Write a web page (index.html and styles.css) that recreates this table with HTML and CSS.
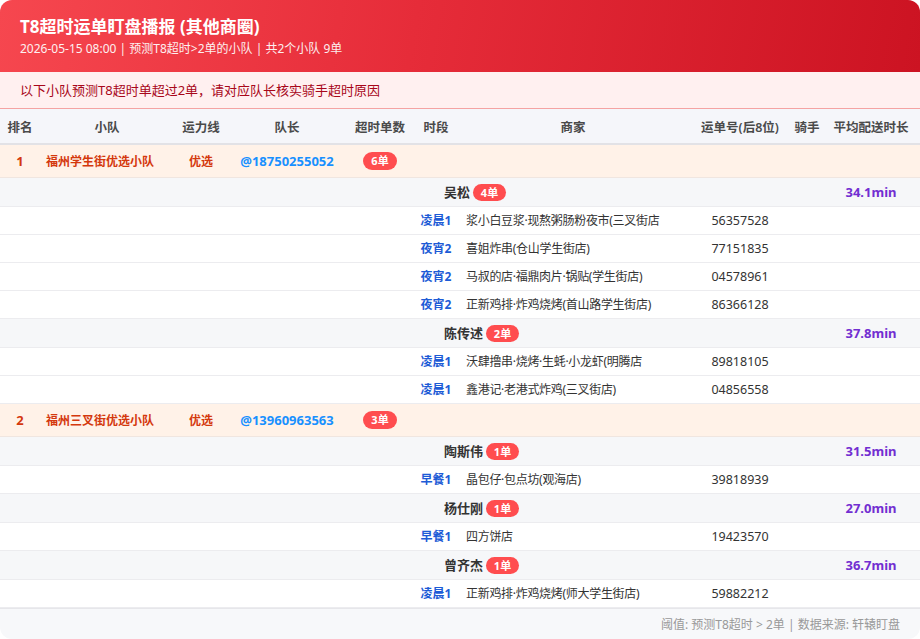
FILE: index.html
```html
<!DOCTYPE html>
<html lang="zh">
<head>
<meta charset="utf-8">
<title>T8超时运单盯盘播报</title>
<link rel="stylesheet" href="styles.css">
</head>
<body>
<div class="card">
  <div class="hero">
    <div class="hero-title">T8超时运单盯盘播报 (其他商圈)</div>
    <div class="hero-sub">2026-05-15 08:00 | 预测T8超时&gt;2单的小队 | 共2个小队 9单</div>
  </div>
  <div class="alert">以下小队预测T8超时单超过2单，请对应队长核实骑手超时原因</div>
  <table class="grid">
    <colgroup>
      <col class="c-rank"><col class="c-team"><col class="c-line"><col class="c-lead"><col class="c-cnt"><col class="c-slot"><col class="c-shop"><col class="c-no"><col class="c-rider"><col class="c-avg">
    </colgroup>
    <thead>
      <tr><th>排名</th><th>小队</th><th>运力线</th><th>队长</th><th>超时单数</th><th>时段</th><th>商家</th><th>运单号(后8位)</th><th>骑手</th><th>平均配送时长</th></tr>
    </thead>
    <tbody>
      <tr class="team"><td class="rank">1</td><td class="tname">福州学生街优选小队</td><td class="center">优选</td><td class="lead">@18750255052</td><td class="center"><span class="badge">6单</span></td><td colspan="5"></td></tr>
      <tr class="rider"><td colspan="5"></td><td colspan="4" class="rname">吴松<span class="badge sm">4单</span></td><td class="avg">34.1min</td></tr>
      <tr class="order"><td colspan="5"></td><td class="slot">凌晨1</td><td class="shop">浆小白豆浆·现熬粥肠粉夜市(三叉街店</td><td class="no">56357528</td><td></td><td></td></tr>
      <tr class="order"><td colspan="5"></td><td class="slot">夜宵2</td><td class="shop">喜姐炸串(仓山学生街店)</td><td class="no">77151835</td><td></td><td></td></tr>
      <tr class="order"><td colspan="5"></td><td class="slot">夜宵2</td><td class="shop">马叔的店·福鼎肉片·锅贴(学生街店)</td><td class="no">04578961</td><td></td><td></td></tr>
      <tr class="order"><td colspan="5"></td><td class="slot">夜宵2</td><td class="shop">正新鸡排·炸鸡烧烤(首山路学生街店)</td><td class="no">86366128</td><td></td><td></td></tr>
      <tr class="rider"><td colspan="5"></td><td colspan="4" class="rname">陈传述<span class="badge sm">2单</span></td><td class="avg">37.8min</td></tr>
      <tr class="order"><td colspan="5"></td><td class="slot">凌晨1</td><td class="shop">沃肆撸串·烧烤·生蚝·小龙虾(明腾店</td><td class="no">89818105</td><td></td><td></td></tr>
      <tr class="order"><td colspan="5"></td><td class="slot">凌晨1</td><td class="shop">鑫港记·老港式炸鸡(三叉街店)</td><td class="no">04856558</td><td></td><td></td></tr>
      <tr class="team"><td class="rank">2</td><td class="tname">福州三叉街优选小队</td><td class="center">优选</td><td class="lead">@13960963563</td><td class="center"><span class="badge">3单</span></td><td colspan="5"></td></tr>
      <tr class="rider"><td colspan="5"></td><td colspan="4" class="rname">陶斯伟<span class="badge sm">1单</span></td><td class="avg">31.5min</td></tr>
      <tr class="order"><td colspan="5"></td><td class="slot">早餐1</td><td class="shop">晶包仔·包点坊(观海店)</td><td class="no">39818939</td><td></td><td></td></tr>
      <tr class="rider"><td colspan="5"></td><td colspan="4" class="rname">杨仕刚<span class="badge sm">1单</span></td><td class="avg">27.0min</td></tr>
      <tr class="order"><td colspan="5"></td><td class="slot">早餐1</td><td class="shop">四方饼店</td><td class="no">19423570</td><td></td><td></td></tr>
      <tr class="rider"><td colspan="5"></td><td colspan="4" class="rname">曾齐杰<span class="badge sm">1单</span></td><td class="avg">36.7min</td></tr>
      <tr class="order"><td colspan="5"></td><td class="slot">凌晨1</td><td class="shop">正新鸡排·炸鸡烧烤(师大学生街店)</td><td class="no">59882212</td><td></td><td></td></tr>
    </tbody>
  </table>
  <div class="foot">阈值: 预测T8超时 &gt; 2单 | 数据来源: 轩辕盯盘</div>
</div>
</body>
</html>
```

FILE: styles.css
```css
* { box-sizing: border-box; }
html, body { margin: 0; padding: 0; background: #ffffff; }
body {
  font-family: "Noto Sans", "Noto Sans CJK SC", sans-serif;
  color: #333;
}
.card {
  width: 920px;
  height: 639px;
  border-radius: 12px;
  overflow: hidden;
  background: #f7f8fa;
  display: flex;
  flex-direction: column;
}
.hero {
  height: 72px;
  padding: 16px 20px 0;
  background: linear-gradient(100deg, #f6474f 0%, #e62c39 45%, #cc1322 100%);
  color: #fff;
}
.hero-title {
  font-size: 17px;
  font-weight: 700;
  line-height: 22px;
}
.hero-sub {
  font-size: 12px;
  line-height: 18px;
  margin-top: 2px;
  opacity: 0.92;
}
.alert {
  height: 37px;
  line-height: 36px;
  padding: 0 20px;
  background: #fff0f0;
  border-bottom: 1px solid #f5a3a3;
  color: #a8071a;
  font-size: 13px;
}
.grid {
  width: 920px;
  border-collapse: collapse;
  table-layout: fixed;
  font-size: 12px;
}
.c-rank { width: 40px; }
.c-team { width: 134px; }
.c-line { width: 54px; }
.c-lead { width: 118px; }
.c-cnt { width: 68px; }
.c-slot { width: 44px; }
.c-shop { width: 230px; }
.c-no { width: 104px; }
.c-rider { width: 30px; }
.c-avg { width: 98px; }
.grid th {
  height: 35px;
  padding: 0;
  background: #f5f6fa;
  border-bottom: 2px solid #e2e2e6;
  font-size: 12.5px;
  font-weight: 600;
  color: #4a4a4a;
  text-align: center;
  white-space: nowrap;
}
.grid td {
  padding: 0;
  white-space: nowrap;
  overflow: visible;
}
.team td {
  height: 33px;
  background: #fff2e8;
  border-bottom: 1px solid #f0e6e0;
  color: #d4380d;
  font-weight: 600;
}
.team .rank { text-align: center; font-size: 13px; font-weight: 700; }
.team .tname { padding-left: 6px; font-size: 12px; }
.team .center { text-align: center; }
.team .lead { text-align: center; color: #1890ff; font-weight: 700; font-size: 13px; }
.badge {
  display: inline-block;
  min-width: 34px;
  height: 18px;
  line-height: 18px;
  padding: 0 7px;
  border-radius: 9px;
  background: #ff4d4f;
  color: #fff;
  font-size: 11px;
  font-weight: 700;
  text-align: center;
  vertical-align: middle;
}
.badge.sm { min-width: 33px; height: 17px; line-height: 17px; margin-left: 3px; }
.rider td {
  height: 29px;
  background: #f6f7f9;
  border-bottom: 1px solid #ececef;
}
.rider .rname {
  padding-left: 30px;
  font-size: 13px;
  font-weight: 700;
  color: #333;
}
.rider .avg {
  text-align: center;
  color: #722ed1;
  font-weight: 700;
  font-size: 13px;
}
.order td {
  height: 28px;
  background: #fff;
  border-bottom: 1px solid #ececef;
}
.order .slot { text-align: center; color: #1d5bd6; font-weight: 700; }
.order .shop { padding-left: 8px; color: #333; letter-spacing: -0.3px; }
.order .no { text-align: center; color: #333; font-size: 12.5px; }
.foot {
  flex: 1;
  border-top: 1px solid #e6e6ea;
  padding: 0 20px;
  display: flex;
  align-items: center;
  justify-content: flex-end;
  font-size: 12px;
  color: #999;
}
```
